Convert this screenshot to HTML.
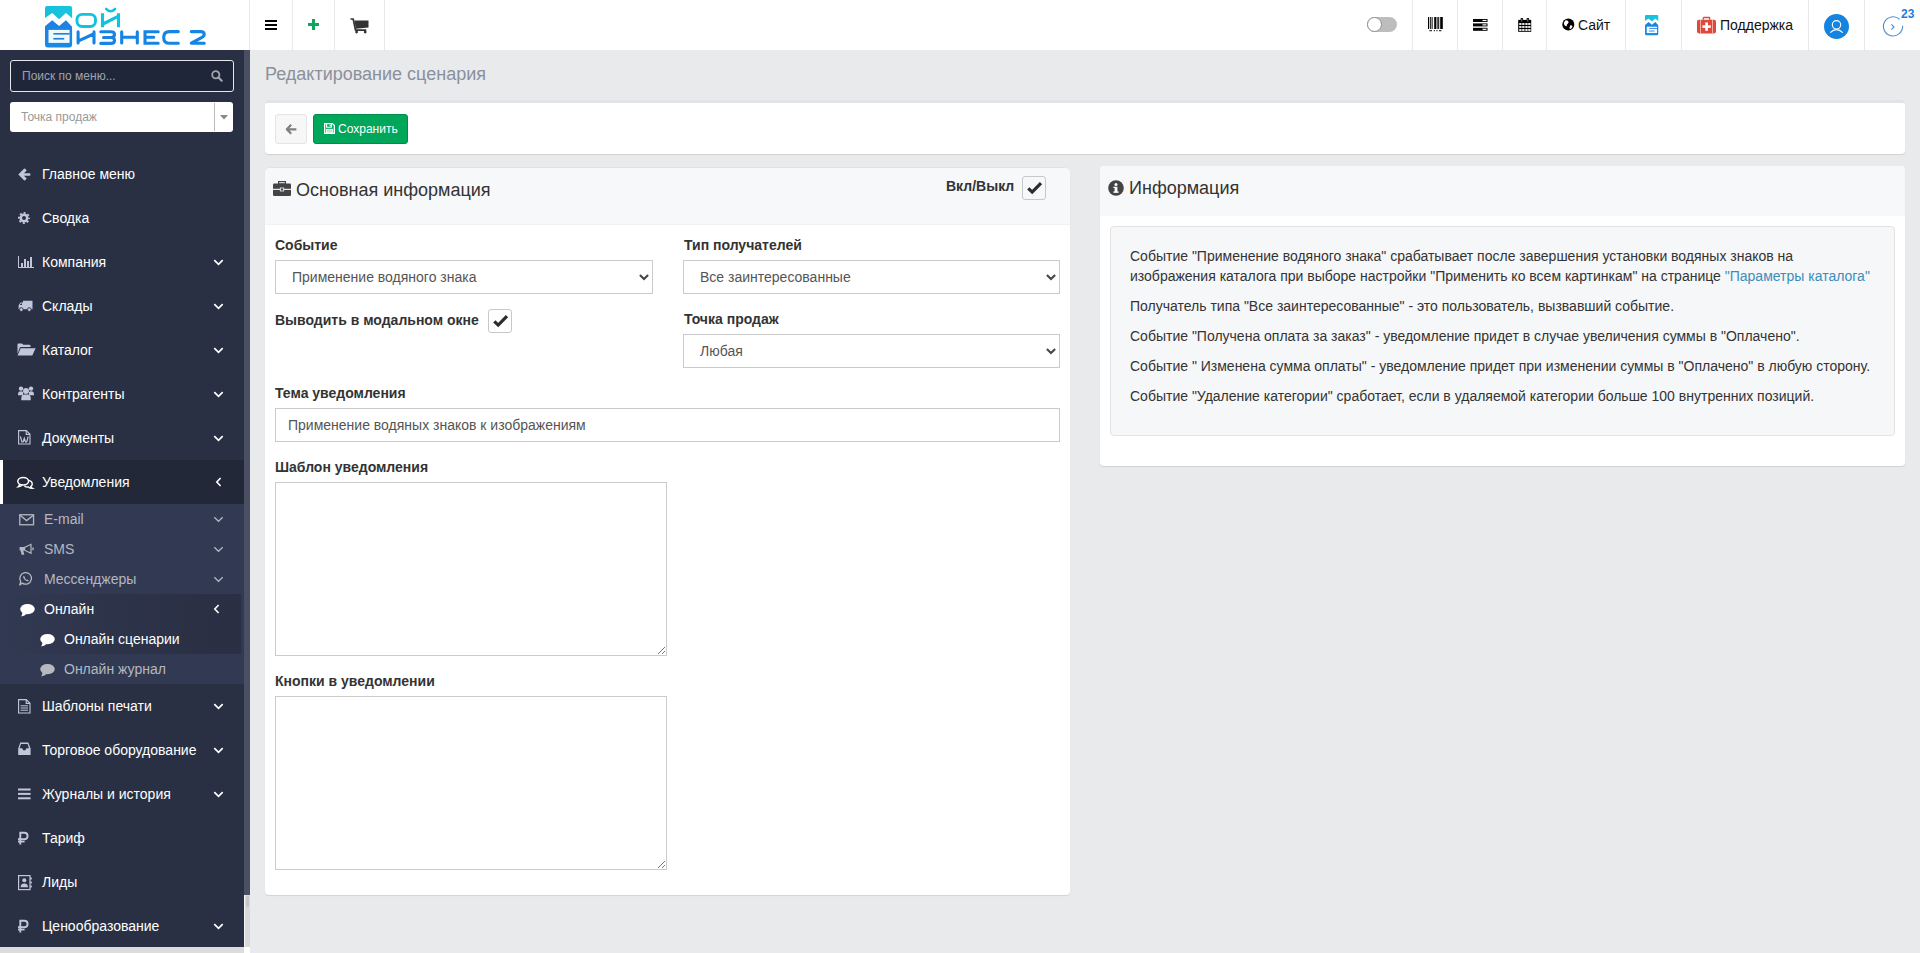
<!DOCTYPE html>
<html><head><meta charset="utf-8"><title>Редактирование сценария</title>
<style>
*{box-sizing:border-box;margin:0;padding:0}
html,body{width:1920px;height:953px;overflow:hidden}
body{font-family:"Liberation Sans",sans-serif;font-size:14px;color:#333;background:#e9eaec;position:relative}
.abs{position:absolute}
svg{display:block;overflow:visible}
</style></head>
<body>
<div class="abs" style="left:0;top:0;width:1920px;height:50px;background:#fff"></div>
<div class="abs" style="left:249px;top:0;width:1px;height:50px;background:#e9e9e9"></div>
<div class="abs" style="left:292px;top:0;width:1px;height:50px;background:#e9e9e9"></div>
<div class="abs" style="left:334px;top:0;width:1px;height:50px;background:#e9e9e9"></div>
<div class="abs" style="left:384px;top:0;width:1px;height:50px;background:#e9e9e9"></div>
<div class="abs" style="left:1412px;top:0;width:1px;height:50px;background:#e9e9e9"></div>
<div class="abs" style="left:1457px;top:0;width:1px;height:50px;background:#e9e9e9"></div>
<div class="abs" style="left:1502px;top:0;width:1px;height:50px;background:#e9e9e9"></div>
<div class="abs" style="left:1546px;top:0;width:1px;height:50px;background:#e9e9e9"></div>
<div class="abs" style="left:1625px;top:0;width:1px;height:50px;background:#e9e9e9"></div>
<div class="abs" style="left:1681px;top:0;width:1px;height:50px;background:#e9e9e9"></div>
<div class="abs" style="left:1808px;top:0;width:1px;height:50px;background:#e9e9e9"></div>
<div class="abs" style="left:1864px;top:0;width:1px;height:50px;background:#e9e9e9"></div>
<svg class="abs" style="left:45.4px;top:6px" width="27.1" height="41.6" viewBox="0 0 27.1 41.6"><defs><linearGradient id="lgc45" x1="0" y1="0" x2="1" y2="0"><stop offset="0" stop-color="#17bedb"/><stop offset="1" stop-color="#17c6de"/></linearGradient><linearGradient id="lgb45" x1="0" y1="0" x2="0" y2="1"><stop offset="0" stop-color="#1f80e4"/><stop offset="1" stop-color="#1a8ae2"/></linearGradient></defs><path d="M0 2 Q0 0 2 0 H25.1 Q27.1 0 27.1 2 V12.3 L21 6.9 L14.1 13.3 L7.2 6.9 L0 12 Z" fill="url(#lgc45)"/><path d="M0 20.2 L7.2 14.2 L14.1 19.9 L21 14.2 L27.1 20.7 V38.6 Q27.1 41.6 24.1 41.6 H3 Q0 41.6 0 38.6 Z" fill="url(#lgb45)"/><rect x="3.5" y="23.9" width="21.1" height="13" fill="#effafe"/><rect x="8.4" y="27" width="16.2" height="1.6" fill="#1e80e0"/><rect x="8.4" y="31.9" width="10.8" height="1.7" fill="#1e80e0"/></svg>
<svg class="abs" style="left:0;top:0" width="249" height="50" viewBox="0 0 249 50"><rect x="77" y="14.35" width="18.5" height="12.1" rx="5.2" fill="none" stroke="#12c1dd" stroke-width="2.9"/><path d="M102.5 13.2 V27.2 M118.5 13.2 V27.2 M103 24 L118 16.4" fill="none" stroke="#12c1dd" stroke-width="3.1"/><path d="M106.2 8.9 Q110.6 13.8 115.1 8.9" fill="none" stroke="#12c1dd" stroke-width="2.5" stroke-linecap="round"/><g fill="none" stroke="#1584e4" stroke-width="3.1" stroke-linecap="round" stroke-linejoin="round"><path d="M78.1 31.9 V42.9 M94 31.9 V42.9 M78.6 40.8 L93.5 34"/><path d="M100.8 31.8 H110.8 Q114.5 31.8 114.5 34.6 Q114.5 37.5 110.8 37.5 H103.5 M110.8 37.5 Q114.5 37.5 114.5 40.4 Q114.5 43.4 110.8 43.4 H100.8"/><path d="M121.7 31.9 V42.9 M137.3 31.9 V42.9 M121.7 37.2 H137.3"/><path d="M158.2 31.7 H145 V43.2 H158.2 M145 37.3 H153.8" stroke-linejoin="miter"/><path d="M178.3 31.6 H169.5 Q163.7 31.6 163.7 37.45 Q163.7 43.3 169.5 43.3 H178.3"/><path d="M191.3 31.6 H200.5 Q204.2 31.6 204.2 34.3 Q204.2 36.3 201.5 37.6 L191.3 43.2 H204.2"/></g></svg>
<svg class="abs" style="left:265px;top:20px" width="12" height="10" viewBox="0 0 12 10"><rect x="0" y="0" width="12" height="2" fill="#000"/><rect x="0" y="4" width="12" height="2" fill="#000"/><rect x="0" y="8" width="12" height="2" fill="#000"/></svg>
<svg class="abs" style="left:308px;top:19px" width="11" height="11" viewBox="0 0 11 11"><rect x="4" y="0" width="3" height="11" fill="#0ea55c"/><rect x="0" y="4" width="11" height="3" fill="#0ea55c"/></svg>
<svg class="abs" style="left:350px;top:18px" width="19" height="16" viewBox="0 0 19 16"><path d="M0.5 1 H3.2 L5.5 12.2 H16.3" fill="none" stroke="#333" stroke-width="1.7" stroke-linejoin="round"/><path d="M4.4 2.4 H18.5 V9.5 L5.8 10.8 Z" fill="#333"/><circle cx="6.6" cy="14.1" r="1.4" fill="#333"/><circle cx="15.2" cy="14.1" r="1.4" fill="#333"/></svg>
<div class="abs" style="left:1367px;top:17px;width:30px;height:15px;border-radius:8px;background:#bdbdbd"></div>
<div class="abs" style="left:1367px;top:17px;width:15px;height:15px;border-radius:50%;background:#fff;border:1px solid #8f8f8f"></div>
<svg class="abs" style="left:1428px;top:17px" width="15" height="15" viewBox="0 0 15 15"><rect x="0" y="0" width="1" height="12" fill="#000"/><rect x="1.8" y="0" width="1" height="12" fill="#000"/><rect x="3.6" y="0" width="1" height="12" fill="#000"/><rect x="6.2" y="0" width="1.8" height="12" fill="#000"/><rect x="8.6" y="0" width="1" height="12" fill="#000"/><rect x="10.2" y="0" width="1" height="12" fill="#000"/><rect x="12.2" y="0" width="2.6" height="12" fill="#000"/><rect x="1.4" y="13.2" width="2.6" height="1" fill="#000"/><rect x="5.8" y="13.2" width="1.2" height="1" fill="#000"/><rect x="8.4" y="13.2" width="1.2" height="1" fill="#000"/><rect x="11" y="13.2" width="2.4" height="1" fill="#000"/></svg>
<svg class="abs" style="left:1473px;top:19px" width="15" height="12" viewBox="0 0 15 12"><rect x="0" y="0" width="14.5" height="3" fill="#000"/><rect x="0" y="4.4" width="14.5" height="3" fill="#000"/><rect x="0" y="8.8" width="14.5" height="3" fill="#000"/><rect x="9.5" y="0.9" width="4" height="1.2" fill="#fff"/><rect x="9.5" y="5.3" width="4" height="1.2" fill="#fff"/><rect x="9.5" y="9.7" width="4" height="1.2" fill="#fff"/></svg>
<svg class="abs" style="left:1518px;top:18px" width="14" height="14" viewBox="0 0 14 14"><rect x="0.2" y="1.9" width="13" height="11.9" fill="#000"/><rect x="2.6" y="0" width="2.5" height="4.4" rx="0.8" fill="#000"/><rect x="8.6" y="0" width="2.5" height="4.4" rx="0.8" fill="#000"/><rect x="3.5" y="0.9" width="0.7" height="2.8" fill="#8cc"/><rect x="9.5" y="0.9" width="0.7" height="2.8" fill="#8cc"/><rect x="1.2" y="5.1" width="2.3" height="1.8" fill="#fff"/><rect x="1.2" y="8.1" width="2.3" height="1.8" fill="#fff"/><rect x="1.2" y="11.1" width="2.3" height="1.8" fill="#fff"/><rect x="4.2" y="5.1" width="2.3" height="1.8" fill="#fff"/><rect x="4.2" y="8.1" width="2.3" height="1.8" fill="#fff"/><rect x="4.2" y="11.1" width="2.3" height="1.8" fill="#fff"/><rect x="7.3" y="5.1" width="2.3" height="1.8" fill="#fff"/><rect x="7.3" y="8.1" width="2.3" height="1.8" fill="#fff"/><rect x="7.3" y="11.1" width="2.3" height="1.8" fill="#fff"/><rect x="10.2" y="5.1" width="2.3" height="1.8" fill="#fff"/><rect x="10.2" y="8.1" width="2.3" height="1.8" fill="#fff"/><rect x="10.2" y="11.1" width="2.3" height="1.8" fill="#fff"/></svg>
<svg class="abs" style="left:1562px;top:18px" width="13" height="13" viewBox="0 0 13 13"><circle cx="6.3" cy="6.5" r="6" fill="#000"/><path d="M3.2 2.4 Q5 1.8 6.2 3.2 Q7.2 4.6 5.8 5.8 Q4.2 6.6 4.8 8.2 Q3 8.6 2.2 6.8 Q1.4 4.4 3.2 2.4 Z M8.2 7.4 Q9.8 7 10.6 8.4 Q9.8 10.6 7.8 11.2 Q7 9.4 8.2 7.4 Z" fill="#fff"/></svg>
<div class="abs" style="left:1578px;top:0;line-height:50px;font-size:14px;color:#111;white-space:nowrap">Сайт</div>
<svg class="abs" style="left:1645.3px;top:14.9px" width="13.279" height="20.384" viewBox="0 0 27.1 41.6"><defs><linearGradient id="lgc1645" x1="0" y1="0" x2="1" y2="0"><stop offset="0" stop-color="#17bedb"/><stop offset="1" stop-color="#17c6de"/></linearGradient><linearGradient id="lgb1645" x1="0" y1="0" x2="0" y2="1"><stop offset="0" stop-color="#1f80e4"/><stop offset="1" stop-color="#1a8ae2"/></linearGradient></defs><path d="M0 2 Q0 0 2 0 H25.1 Q27.1 0 27.1 2 V12.3 L21 6.9 L14.1 13.3 L7.2 6.9 L0 12 Z" fill="url(#lgc1645)"/><path d="M0 20.2 L7.2 14.2 L14.1 19.9 L21 14.2 L27.1 20.7 V38.6 Q27.1 41.6 24.1 41.6 H3 Q0 41.6 0 38.6 Z" fill="url(#lgb1645)"/><rect x="3.5" y="23.9" width="21.1" height="13" fill="#effafe"/><rect x="8.4" y="27" width="16.2" height="1.6" fill="#1e80e0"/><rect x="8.4" y="31.9" width="10.8" height="1.7" fill="#1e80e0"/></svg>
<svg class="abs" style="left:1697px;top:17px" width="19" height="17" viewBox="0 0 19 17"><path d="M6.3 2.8 V1.2 Q6.3 0.5 7 0.5 H12 Q12.7 0.5 12.7 1.2 V2.8" fill="none" stroke="#e0483a" stroke-width="1.3"/><rect x="0" y="2.8" width="19" height="13.6" rx="1.8" fill="#e0483a"/><rect x="3" y="2.8" width="1" height="13.6" fill="#fff" opacity=".55"/><rect x="15" y="2.8" width="1" height="13.6" fill="#fff" opacity=".55"/><rect x="8.3" y="5.4" width="2.6" height="8.4" fill="#fff"/><rect x="5.4" y="8.3" width="8.4" height="2.6" fill="#fff"/></svg>
<div class="abs" style="left:1720px;top:0;line-height:50px;font-size:14px;color:#111;white-space:nowrap">Поддержка</div>
<svg class="abs" style="left:1824px;top:13.8px" width="26" height="26" viewBox="0 0 26 26"><circle cx="12.5" cy="12.5" r="12.5" fill="#1584e0"/><circle cx="12.5" cy="10.8" r="4.2" fill="none" stroke="#fff" stroke-width="1.1"/><path d="M6.2 18.6 Q12.5 12.6 18.8 18.6" fill="none" stroke="#fff" stroke-width="1.1"/></svg>
<svg class="abs" style="left:1882px;top:15.8px" width="22" height="22" viewBox="0 0 22 22"><path d="M17.6 3.4 A9.6 9.6 0 1 0 20.6 9.8" fill="none" stroke="#4a8fd0" stroke-width="1.1"/><path d="M9.4 8.4 L12 11 L9.4 13.6" fill="none" stroke="#4a8fd0" stroke-width="1.1"/></svg>
<div class="abs" style="left:1901px;top:7px;line-height:14px;font-size:12px;font-weight:bold;color:#1a7fe0;white-space:nowrap">23</div>
<div class="abs" style="left:0;top:50px;width:244px;height:897px;background:#293044"></div>
<div class="abs" style="left:10px;top:60px;width:224px;height:32px;background:#20263a;border:1px solid #e6e7ea;border-radius:3px"></div>
<div class="abs" style="left:22px;top:60px;line-height:32px;font-size:12px;color:#9fa3ad;white-space:nowrap">Поиск по меню...</div>
<svg class="abs" style="left:211px;top:70px" width="12" height="12" viewBox="0 0 12 12"><circle cx="4.8" cy="4.8" r="3.6" fill="none" stroke="#a1a4ad" stroke-width="1.8"/><path d="M7.5 7.5 L10.7 10.7" stroke="#a1a4ad" stroke-width="2.2" stroke-linecap="round"/></svg>
<div class="abs" style="left:10px;top:102px;width:223px;height:30px;background:#fff;border-radius:3px"></div>
<div class="abs" style="left:214px;top:103px;width:1px;height:28px;background:#bbb"></div>
<div class="abs" style="left:21px;top:102px;line-height:30px;font-size:12px;color:#999;white-space:nowrap">Точка продаж</div>
<svg class="abs" style="left:220px;top:115px" width="8" height="5" viewBox="0 0 8 5"><path d="M0 0 H8 L4 4.5 Z" fill="#888"/></svg>
<div class="abs" style="left:0;top:460px;width:244px;height:44px;background:#222838"></div>
<div class="abs" style="left:0;top:460px;width:3px;height:44px;background:#fff"></div>
<div class="abs" style="left:0;top:504px;width:244px;height:180px;background:#323a53"></div>
<div class="abs" style="left:0;top:594px;width:241px;height:60px;background:linear-gradient(90deg,#323a53 0%,#2d3349 45%,#2a2f43 100%)"></div>
<div class="abs" style="left:42px;top:152px;line-height:44px;font-size:14px;color:#fff;white-space:nowrap">Главное меню</div>
<div class="abs" style="left:42px;top:196px;line-height:44px;font-size:14px;color:#fff;white-space:nowrap">Сводка</div>
<div class="abs" style="left:42px;top:240px;line-height:44px;font-size:14px;color:#fff;white-space:nowrap">Компания</div>
<svg class="abs" style="left:213px;top:259px" width="11" height="7" viewBox="0 0 11 7"><path d="M1.3 1.2 L5.5 5.3 L9.7 1.2" fill="none" stroke="#fff" stroke-width="1.7"/></svg>
<div class="abs" style="left:42px;top:284px;line-height:44px;font-size:14px;color:#fff;white-space:nowrap">Склады</div>
<svg class="abs" style="left:213px;top:303px" width="11" height="7" viewBox="0 0 11 7"><path d="M1.3 1.2 L5.5 5.3 L9.7 1.2" fill="none" stroke="#fff" stroke-width="1.7"/></svg>
<div class="abs" style="left:42px;top:328px;line-height:44px;font-size:14px;color:#fff;white-space:nowrap">Каталог</div>
<svg class="abs" style="left:213px;top:347px" width="11" height="7" viewBox="0 0 11 7"><path d="M1.3 1.2 L5.5 5.3 L9.7 1.2" fill="none" stroke="#fff" stroke-width="1.7"/></svg>
<div class="abs" style="left:42px;top:372px;line-height:44px;font-size:14px;color:#fff;white-space:nowrap">Контрагенты</div>
<svg class="abs" style="left:213px;top:391px" width="11" height="7" viewBox="0 0 11 7"><path d="M1.3 1.2 L5.5 5.3 L9.7 1.2" fill="none" stroke="#fff" stroke-width="1.7"/></svg>
<div class="abs" style="left:42px;top:416px;line-height:44px;font-size:14px;color:#fff;white-space:nowrap">Документы</div>
<svg class="abs" style="left:213px;top:435px" width="11" height="7" viewBox="0 0 11 7"><path d="M1.3 1.2 L5.5 5.3 L9.7 1.2" fill="none" stroke="#fff" stroke-width="1.7"/></svg>
<div class="abs" style="left:42px;top:460px;line-height:44px;font-size:14px;color:#fff;white-space:nowrap">Уведомления</div>
<svg class="abs" style="left:215px;top:477px" width="7" height="10" viewBox="0 0 7 10"><path d="M5.6 1 L1.8 5 L5.6 9" fill="none" stroke="#fff" stroke-width="1.6"/></svg>
<div class="abs" style="left:42px;top:684px;line-height:44px;font-size:14px;color:#fff;white-space:nowrap">Шаблоны печати</div>
<svg class="abs" style="left:213px;top:703px" width="11" height="7" viewBox="0 0 11 7"><path d="M1.3 1.2 L5.5 5.3 L9.7 1.2" fill="none" stroke="#fff" stroke-width="1.7"/></svg>
<div class="abs" style="left:42px;top:728px;line-height:44px;font-size:14px;color:#fff;white-space:nowrap">Торговое оборудование</div>
<svg class="abs" style="left:213px;top:747px" width="11" height="7" viewBox="0 0 11 7"><path d="M1.3 1.2 L5.5 5.3 L9.7 1.2" fill="none" stroke="#fff" stroke-width="1.7"/></svg>
<div class="abs" style="left:42px;top:772px;line-height:44px;font-size:14px;color:#fff;white-space:nowrap">Журналы и история</div>
<svg class="abs" style="left:213px;top:791px" width="11" height="7" viewBox="0 0 11 7"><path d="M1.3 1.2 L5.5 5.3 L9.7 1.2" fill="none" stroke="#fff" stroke-width="1.7"/></svg>
<div class="abs" style="left:42px;top:816px;line-height:44px;font-size:14px;color:#fff;white-space:nowrap">Тариф</div>
<div class="abs" style="left:42px;top:860px;line-height:44px;font-size:14px;color:#fff;white-space:nowrap">Лиды</div>
<div class="abs" style="left:42px;top:904px;line-height:44px;font-size:14px;color:#fff;white-space:nowrap">Ценообразование</div>
<svg class="abs" style="left:213px;top:923px" width="11" height="7" viewBox="0 0 11 7"><path d="M1.3 1.2 L5.5 5.3 L9.7 1.2" fill="none" stroke="#fff" stroke-width="1.7"/></svg>
<div class="abs" style="left:44px;top:504px;line-height:30px;font-size:14px;color:#b4b8c0;white-space:nowrap">E-mail</div>
<svg class="abs" style="left:213px;top:516px" width="11" height="7" viewBox="0 0 11 7"><path d="M1.3 1.2 L5.5 5.3 L9.7 1.2" fill="none" stroke="#b4b8c0" stroke-width="1.2"/></svg>
<div class="abs" style="left:44px;top:534px;line-height:30px;font-size:14px;color:#b4b8c0;white-space:nowrap">SMS</div>
<svg class="abs" style="left:213px;top:546px" width="11" height="7" viewBox="0 0 11 7"><path d="M1.3 1.2 L5.5 5.3 L9.7 1.2" fill="none" stroke="#b4b8c0" stroke-width="1.2"/></svg>
<div class="abs" style="left:44px;top:564px;line-height:30px;font-size:14px;color:#b4b8c0;white-space:nowrap">Мессенджеры</div>
<svg class="abs" style="left:213px;top:576px" width="11" height="7" viewBox="0 0 11 7"><path d="M1.3 1.2 L5.5 5.3 L9.7 1.2" fill="none" stroke="#b4b8c0" stroke-width="1.2"/></svg>
<div class="abs" style="left:44px;top:594px;line-height:30px;font-size:14px;color:#fff;white-space:nowrap">Онлайн</div>
<svg class="abs" style="left:213px;top:604px" width="7" height="10" viewBox="0 0 7 10"><path d="M5.6 1 L1.8 5 L5.6 9" fill="none" stroke="#fff" stroke-width="1.6"/></svg>
<div class="abs" style="left:64px;top:624px;line-height:30px;font-size:14px;color:#fff;white-space:nowrap">Онлайн сценарии</div>
<div class="abs" style="left:64px;top:654px;line-height:30px;font-size:14px;color:#b4b8c0;white-space:nowrap">Онлайн журнал</div>
<svg class="abs" style="left:18px;top:168px" width="13" height="13" viewBox="0 0 13 13"><path d="M0.3 6.5 L6 0.8 Q6.6 0.3 7.2 0.8 L8.3 1.9 Q8.8 2.5 8.3 3.1 L5.9 5.3 L11.6 5.3 Q12.4 5.3 12.4 6.1 L12.4 7 Q12.4 7.8 11.6 7.8 L5.9 7.8 L8.3 10 Q8.8 10.5 8.3 11.1 L7.2 12.2 Q6.6 12.7 6 12.2 Z" fill="#c2c6da"/></svg>
<svg class="abs" style="left:18px;top:212px" width="12" height="12" viewBox="0 0 12 12"><circle cx="6" cy="6" r="5.1" fill="none" stroke="#c2c6da" stroke-width="1.8" stroke-dasharray="2.0 2.0" stroke-dashoffset="1"/><path fill-rule="evenodd" fill="#c2c6da" d="M6 1.5 A4.5 4.5 0 1 1 6 10.5 A4.5 4.5 0 1 1 6 1.5 Z M6 4 A2 2 0 1 0 6 8 A2 2 0 1 0 6 4 Z"/></svg>
<svg class="abs" style="left:18px;top:256px" width="16" height="13" viewBox="0 0 16 13"><path d="M0 0 H1 V11 H16 V12 H0 Z" fill="#c2c6da"/><rect x="3" y="7" width="2" height="4" fill="#c2c6da"/><rect x="6" y="3" width="2" height="8" fill="#c2c6da"/><rect x="9" y="5" width="2" height="6" fill="#c2c6da"/><rect x="12" y="1" width="2" height="10" fill="#c2c6da"/></svg>
<svg class="abs" style="left:18px;top:300px" width="15" height="13" viewBox="0 0 15 13"><path d="M5 0.8 H14.5 V9.3 H5 Z M0.6 5.2 L2.6 2.6 H5 V9.3 H0.6 Z" fill="#c2c6da"/><path d="M1.8 5 L3 3.4 H4 V5 Z" fill="#293044"/><circle cx="3.3" cy="9.6" r="1.9" fill="#c2c6da" stroke="#293044" stroke-width="0.9"/><circle cx="11.3" cy="9.6" r="1.9" fill="#c2c6da" stroke="#293044" stroke-width="0.9"/></svg>
<svg class="abs" style="left:17px;top:343px" width="19" height="13" viewBox="0 0 19 13"><path d="M0.5 11 V1.5 Q0.5 0.5 1.5 0.5 H5 L6.3 1.8 H12.5 Q13.5 1.8 13.5 2.8 V4 H4 Q3 4 2.6 5 Z" fill="#c2c6da"/><path d="M3.6 5.2 H18.6 L15.3 12.5 H0.6 Z" fill="#c2c6da"/></svg>
<svg class="abs" style="left:18px;top:386px" width="16" height="15" viewBox="0 0 16 15"><circle cx="3" cy="2.6" r="2.2" fill="#c2c6da"/><circle cx="13" cy="2.6" r="2.2" fill="#c2c6da"/><path d="M0 8.5 Q0 5.2 3 5.2 Q4.3 5.2 5 6 L5 9.2 H0 Z M16 8.5 Q16 5.2 13 5.2 Q11.7 5.2 11 6 L11 9.2 H16 Z" fill="#c2c6da"/><circle cx="8" cy="5" r="3" fill="#c2c6da"/><path d="M3.3 14.2 V12.3 Q3.3 8.5 6.3 8.5 H9.7 Q12.7 8.5 12.7 12.3 V14.2 Z" fill="#c2c6da"/></svg>
<svg class="abs" style="left:18px;top:430px" width="13" height="15" viewBox="0 0 13 15"><path d="M0.6 0.6 H8.3 L12 4.3 V14 H0.6 Z" fill="none" stroke="#c2c6da" stroke-width="1.1"/><path d="M8.2 0.6 V4.4 H12" fill="none" stroke="#c2c6da" stroke-width="1.1"/><path d="M2.4 6.5 L3.9 12 L5.1 12 L6.3 8.2 L7.5 12 L8.7 12 L10.2 6.5" fill="none" stroke="#c2c6da" stroke-width="1.2"/></svg>
<svg class="abs" style="left:17px;top:477px" width="17" height="12" viewBox="0 0 17 12"><ellipse cx="6.2" cy="4.3" rx="5.4" ry="3.7" fill="none" stroke="#fff" stroke-width="1.5"/><path d="M2.5 7.2 Q2.2 9 1.2 9.8 Q4 9.5 5.2 8" fill="none" stroke="#fff" stroke-width="1.3"/><path d="M11.8 3.4 Q15.6 4.6 15.2 7.3 Q15 8.6 13.8 9.4 Q14.2 10.6 15.4 11.3 Q12.6 11.3 11.3 10 Q9.2 10.3 7.4 9.1" fill="none" stroke="#fff" stroke-width="1.4"/></svg>
<svg class="abs" style="left:19px;top:514px" width="16" height="12" viewBox="0 0 16 12"><rect x="0.75" y="0.75" width="13.8" height="10" fill="none" stroke="#b4b8c0" stroke-width="1.3"/><path d="M1 1.2 L7.65 6.6 L14.3 1.2" fill="none" stroke="#b4b8c0" stroke-width="1.3"/></svg>
<svg class="abs" style="left:19px;top:543px" width="16" height="13" viewBox="0 0 16 13"><path d="M0.6 4 H5 L12.6 0.4 V11.2 L5 7.6 H4.3 L5.3 11.8 H2.6 L1.6 7.6 H0.6 Z" fill="#b4b8c0"/><path d="M11.4 2.3 V9.3 L6.2 6.9 V4.7 Z" fill="#323a53"/><rect x="13.3" y="4.5" width="1.4" height="2.6" fill="#b4b8c0"/></svg>
<svg class="abs" style="left:19px;top:572px" width="14" height="14" viewBox="0 0 14 14"><path d="M3.3 11.1 A5.8 5.8 0 1 0 1.7 9.4 L0.8 13 Z" fill="none" stroke="#b4b8c0" stroke-width="1.3" stroke-linejoin="round"/><path d="M4.6 3.8 Q3.7 4.6 4.4 6 Q5.6 8.4 8.1 9.2 Q9.3 9.5 9.8 8.5 L8.6 7.6 L7.9 8.1 Q6.2 7.3 5.7 5.8 L6.2 5.2 Z" fill="#b4b8c0"/></svg>
<svg class="abs" style="left:19.5px;top:603.6px" width="15" height="13" viewBox="0 0 15 13"><ellipse cx="7.5" cy="5.1" rx="7.3" ry="5.1" fill="#fff"/><path d="M2.4 8 Q2.6 10.6 1.2 12.4 Q5 11.8 6.8 9.8 Z" fill="#fff"/></svg>
<svg class="abs" style="left:39.7px;top:633.6px" width="15" height="13" viewBox="0 0 15 13"><ellipse cx="7.5" cy="5.1" rx="7.3" ry="5.1" fill="#fff"/><path d="M2.4 8 Q2.6 10.6 1.2 12.4 Q5 11.8 6.8 9.8 Z" fill="#fff"/></svg>
<svg class="abs" style="left:39.7px;top:663.6px" width="15" height="13" viewBox="0 0 15 13"><ellipse cx="7.5" cy="5.1" rx="7.3" ry="5.1" fill="#b6b9c0"/><path d="M2.4 8 Q2.6 10.6 1.2 12.4 Q5 11.8 6.8 9.8 Z" fill="#b6b9c0"/></svg>
<svg class="abs" style="left:18px;top:699px" width="13" height="15" viewBox="0 0 13 15"><path d="M0.6 0.6 H8.3 L12 4.3 V14 H0.6 Z" fill="none" stroke="#c2c6da" stroke-width="1.1"/><path d="M8.2 0.6 V4.4 H12" fill="none" stroke="#c2c6da" stroke-width="1.1"/><path d="M2.6 6.8 H10 M2.6 9 H10 M2.6 11.2 H10" stroke="#c2c6da" stroke-width="1"/></svg>
<svg class="abs" style="left:18px;top:742px" width="13" height="14" viewBox="0 0 13 14"><path d="M2.3 0.5 H10.3 L12.6 6.5 V13 H0.2 V6.5 Z" fill="#c2c6da"/><path d="M3 2 H9.6 L11 6.2 H8.4 L7.4 8.2 H5.2 L4.2 6.2 H1.6 Z" fill="#293044"/></svg>
<svg class="abs" style="left:18px;top:788px" width="13" height="12" viewBox="0 0 13 12"><rect x="0" y="0.5" width="12.6" height="2" fill="#c2c6da"/><rect x="0" y="4.9" width="12.6" height="2" fill="#c2c6da"/><rect x="0" y="9.3" width="12.6" height="2" fill="#c2c6da"/></svg>
<svg class="abs" style="left:17px;top:832px" width="12" height="13" viewBox="0 0 12 13"><path d="M3.3 12.5 V0.8 H7.3 Q10.6 0.8 10.6 4 Q10.6 7.2 7.3 7.2 H1" fill="none" stroke="#c2c6da" stroke-width="1.9"/><path d="M1 9.6 H7.6" stroke="#c2c6da" stroke-width="1.7"/></svg>
<svg class="abs" style="left:17px;top:920px" width="12" height="13" viewBox="0 0 12 13"><path d="M3.3 12.5 V0.8 H7.3 Q10.6 0.8 10.6 4 Q10.6 7.2 7.3 7.2 H1" fill="none" stroke="#c2c6da" stroke-width="1.9"/><path d="M1 9.6 H7.6" stroke="#c2c6da" stroke-width="1.7"/></svg>
<svg class="abs" style="left:18px;top:875px" width="14" height="16" viewBox="0 0 14 16"><rect x="0.6" y="0.6" width="11.4" height="14" fill="none" stroke="#c2c6da" stroke-width="1.2"/><circle cx="6.3" cy="5.3" r="2" fill="#c2c6da"/><path d="M2.6 12.3 Q2.6 8.5 6.3 8.5 Q10 8.5 10 12.3 Z" fill="#c2c6da"/><rect x="12.2" y="2.5" width="1.6" height="2" fill="#c2c6da"/><rect x="12.2" y="6.5" width="1.6" height="2" fill="#c2c6da"/><rect x="12.2" y="10.5" width="1.6" height="2" fill="#c2c6da"/></svg>
<div class="abs" style="left:244px;top:50px;width:6px;height:845px;background:#4b4f64"></div>
<div class="abs" style="left:244px;top:895px;width:6px;height:52px;background:#d9d9d9;border-left:1px solid #f4f4f4"></div>
<div class="abs" style="left:246px;top:896px;width:3px;height:11px;background:#c6c6c6;border-radius:2px"></div>
<div class="abs" style="left:0;top:947px;width:244px;height:6px;background:#dcdcdc"></div>
<div class="abs" style="left:244px;top:947px;width:6px;height:6px;background:#fff"></div>
<div class="abs" style="left:265px;top:63px;line-height:22px;font-size:18px;color:#8a909c;white-space:nowrap">Редактирование сценария</div>
<div class="abs" style="left:265px;top:100px;width:1640px;height:54px;background:#fff;border-top:3px solid #e1e3e7;border-radius:4px;box-shadow:0 1px 1px rgba(0,0,0,.1)"></div>
<div class="abs" style="left:275px;top:114px;width:32px;height:30px;background:#f7f7f7;border:1px solid #e4e4e4;border-radius:3px"></div>
<svg class="abs" style="left:286px;top:124px" width="11" height="11" viewBox="0 0 11 11"><path d="M5.2 0.8 L0.8 5.3 L5.2 9.8 M1.2 5.3 H10.4" fill="none" stroke="#808080" stroke-width="2.2" stroke-linejoin="round"/></svg>
<div class="abs" style="left:313px;top:114px;width:95px;height:30px;background:#00a65a;border:1px solid #008d4c;border-radius:3px"></div>
<svg class="abs" style="left:324px;top:123px" width="11" height="12" viewBox="0 0 11 12"><path d="M0.65 0.65 H8.4 L10.35 2.6 V10.35 H0.65 Z" fill="none" stroke="#fff" stroke-width="1.3"/><path d="M2.6 0.9 V4.2 H7.4 V0.9" fill="none" stroke="#fff" stroke-width="1.1"/><rect x="5.6" y="1.5" width="1.1" height="1.8" fill="#fff"/><rect x="2.3" y="6.3" width="6.4" height="3.5" fill="#bfe6d2" stroke="#fff" stroke-width="0.9"/></svg>
<div class="abs" style="left:338px;top:114px;line-height:30px;font-size:12px;color:#fff;white-space:nowrap">Сохранить</div>
<div class="abs" style="left:265px;top:167px;width:805px;height:728px;background:#fff;border-top:1px solid #e1e2e6;border-radius:6px 6px 4px 4px;box-shadow:0 1px 1px rgba(0,0,0,.1)"></div>
<div class="abs" style="left:265px;top:168px;width:805px;height:57px;background:#f7f8fa;border-radius:5px 5px 0 0;border-bottom:1px solid #f1f2f4"></div>
<svg class="abs" style="left:273px;top:181px" width="18" height="15" viewBox="0 0 18 15"><rect x="5.6" y="0.6" width="6.8" height="2.4" fill="none" stroke="#444" stroke-width="1.2"/><rect x="0" y="2.6" width="18" height="12.4" rx="1.2" fill="#444"/><rect x="0" y="7.8" width="18" height="1.1" fill="#f7f8fa"/><rect x="7.3" y="7" width="3.4" height="3" fill="#444" stroke="#f7f8fa" stroke-width="0.8"/></svg>
<div class="abs" style="left:296px;top:179px;line-height:22px;font-size:18px;color:#333;white-space:nowrap">Основная информация</div>
<div class="abs" style="left:946px;top:178px;line-height:16px;font-size:14px;font-weight:bold;color:#333;white-space:nowrap">Вкл/Выкл</div>
<div class="abs" style="left:1022px;top:176px;width:24px;height:24px;border:1px solid #c8c8c8;border-radius:3px"></div><svg class="abs" style="left:1027px;top:181px" width="16" height="14" viewBox="0 0 16 14"><path d="M1.3 7.3 L5.2 11.1 L14 2.2" fill="none" stroke="#2d2d2d" stroke-width="3.2"/></svg>
<div class="abs" style="left:275px;top:237px;line-height:16px;font-size:14px;font-weight:bold;color:#333;white-space:nowrap">Событие</div>
<div class="abs" style="left:275px;top:260px;width:378px;height:34px;border:1px solid #cacaca;background:#fff"></div><div class="abs" style="left:292px;top:260px;line-height:34px;font-size:14px;color:#555;white-space:nowrap">Применение водяного знака</div><svg class="abs" style="left:639px;top:274px" width="10" height="7" viewBox="0 0 10 7"><path d="M0.9 0.9 L5 5 L9.1 0.9" fill="none" stroke="#474747" stroke-width="2.1"/></svg>
<div class="abs" style="left:684px;top:237px;line-height:16px;font-size:14px;font-weight:bold;color:#333;white-space:nowrap">Тип получателей</div>
<div class="abs" style="left:683px;top:260px;width:377px;height:34px;border:1px solid #cacaca;background:#fff"></div><div class="abs" style="left:700px;top:260px;line-height:34px;font-size:14px;color:#555;white-space:nowrap">Все заинтересованные</div><svg class="abs" style="left:1046px;top:274px" width="10" height="7" viewBox="0 0 10 7"><path d="M0.9 0.9 L5 5 L9.1 0.9" fill="none" stroke="#474747" stroke-width="2.1"/></svg>
<div class="abs" style="left:275px;top:312px;line-height:16px;font-size:14px;font-weight:bold;color:#333;white-space:nowrap">Выводить в модальном окне</div>
<div class="abs" style="left:488px;top:309px;width:24px;height:24px;border:1px solid #c8c8c8;border-radius:3px"></div><svg class="abs" style="left:493px;top:314px" width="16" height="14" viewBox="0 0 16 14"><path d="M1.3 7.3 L5.2 11.1 L14 2.2" fill="none" stroke="#2d2d2d" stroke-width="3.2"/></svg>
<div class="abs" style="left:684px;top:311px;line-height:16px;font-size:14px;font-weight:bold;color:#333;white-space:nowrap">Точка продаж</div>
<div class="abs" style="left:683px;top:334px;width:377px;height:34px;border:1px solid #cacaca;background:#fff"></div><div class="abs" style="left:700px;top:334px;line-height:34px;font-size:14px;color:#555;white-space:nowrap">Любая</div><svg class="abs" style="left:1046px;top:348px" width="10" height="7" viewBox="0 0 10 7"><path d="M0.9 0.9 L5 5 L9.1 0.9" fill="none" stroke="#474747" stroke-width="2.1"/></svg>
<div class="abs" style="left:275px;top:385px;line-height:16px;font-size:14px;font-weight:bold;color:#333;white-space:nowrap">Тема уведомления</div>
<div class="abs" style="left:275px;top:408px;width:785px;height:34px;border:1px solid #cacaca;background:#fff"></div>
<div class="abs" style="left:288px;top:408px;line-height:34px;font-size:14px;color:#555;white-space:nowrap">Применение водяных знаков к изображениям</div>
<div class="abs" style="left:275px;top:459px;line-height:16px;font-size:14px;font-weight:bold;color:#333;white-space:nowrap">Шаблон уведомления</div>
<div class="abs" style="left:275px;top:482px;width:392px;height:174px;border:1px solid #cbcbcb;background:#fff"></div><svg class="abs" style="left:657px;top:646px" width="9" height="9" viewBox="0 0 9 9"><path d="M8 1 L1 8 M8 5 L5 8" stroke="#777" stroke-width="1"/></svg>
<div class="abs" style="left:275px;top:673px;line-height:16px;font-size:14px;font-weight:bold;color:#333;white-space:nowrap">Кнопки в уведомлении</div>
<div class="abs" style="left:275px;top:696px;width:392px;height:174px;border:1px solid #cbcbcb;background:#fff"></div><svg class="abs" style="left:657px;top:860px" width="9" height="9" viewBox="0 0 9 9"><path d="M8 1 L1 8 M8 5 L5 8" stroke="#777" stroke-width="1"/></svg>
<div class="abs" style="left:1100px;top:166px;width:805px;height:300px;background:#fff;border-radius:4px;box-shadow:0 1px 1px rgba(0,0,0,.1)"></div>
<div class="abs" style="left:1100px;top:166px;width:805px;height:50px;background:#f7f8fa;border-radius:4px 4px 0 0"></div>
<svg class="abs" style="left:1108px;top:180px" width="16" height="16" viewBox="0 0 16 16"><circle cx="8" cy="8" r="7.8" fill="#444"/><rect x="6.6" y="6.8" width="2.8" height="5.6" fill="#fff"/><rect x="5.4" y="11.4" width="5.2" height="1.4" fill="#fff"/><rect x="5.4" y="6.8" width="2.2" height="1.2" fill="#fff"/><circle cx="8" cy="4.4" r="1.5" fill="#fff"/></svg>
<div class="abs" style="left:1129px;top:177px;line-height:22px;font-size:18px;color:#333;white-space:nowrap">Информация</div>
<div class="abs" style="left:1110px;top:226px;width:785px;height:210px;background:#f6f7f9;border:1px solid #e3e3e3;border-radius:4px"></div>
<div class="abs" style="left:1130px;top:246px;line-height:20px;font-size:14px;color:#333;white-space:nowrap">Событие "Применение водяного знака" срабатывает после завершения установки водяных знаков на</div>
<div class="abs" style="left:1130px;top:266px;line-height:20px;font-size:14px;color:#333;white-space:nowrap">изображения каталога при выборе настройки "Применить ко всем картинкам" на странице <span style="color:#3c8dbc">"Параметры каталога"</span></div>
<div class="abs" style="left:1130px;top:296px;line-height:20px;font-size:14px;color:#333;white-space:nowrap">Получатель типа "Все заинтересованные" - это пользователь, вызвавший событие.</div>
<div class="abs" style="left:1130px;top:326px;line-height:20px;font-size:14px;color:#333;white-space:nowrap">Событие "Получена оплата за заказ" - уведомление придет в случае увеличения суммы в "Оплачено".</div>
<div class="abs" style="left:1130px;top:356px;line-height:20px;font-size:14px;color:#333;white-space:nowrap">Событие " Изменена сумма оплаты" - уведомление придет при изменении суммы в "Оплачено" в любую сторону.</div>
<div class="abs" style="left:1130px;top:386px;line-height:20px;font-size:14px;color:#333;white-space:nowrap">Событие "Удаление категории" сработает, если в удаляемой категории больше 100 внутренних позиций.</div>
</body></html>
